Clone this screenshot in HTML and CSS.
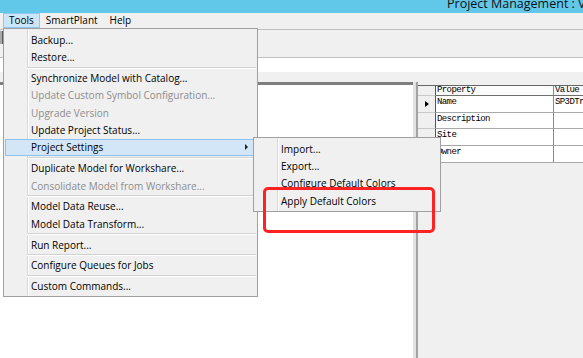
FILE: index.html
```html
<!DOCTYPE html>
<html lang="en">
  <head>
    <meta charset="UTF-8" />
    <title>Project Management</title>
    <link rel="stylesheet" href="styles.css">
  </head>
  <body>
    <div class="titlebar"><span class="title">Project Management : V</span></div>
    <div class="menubar">
      <span class="menubar-item open">Tools</span>
      <span class="menubar-item">SmartPlant</span>
      <span class="menubar-item">Help</span>
    </div>
    <div class="toolbar"><span class="tool-btn"></span></div>
    <div class="addressbar"></div>
    <div class="addressbar-gap"></div>
    <div class="workspace">
      <div class="tree-pane"></div>
      <div class="splitter"></div>
      <div class="grid-pane">
        <div class="prop-grid">
          <div class="cell rowhead head"></div>
          <div class="cell head">Property</div>
          <div class="cell head">Value</div>

          <div class="cell rowhead"><span class="row-mark"></span></div>
          <div class="cell">Name</div>
          <div class="cell">SP3DTrain</div>

          <div class="cell rowhead"></div>
          <div class="cell">Description</div>
          <div class="cell"></div>

          <div class="cell rowhead"></div>
          <div class="cell">Site</div>
          <div class="cell"></div>

          <div class="cell rowhead"></div>
          <div class="cell">Owner</div>
          <div class="cell"></div>
        </div>
      </div>
    </div>

    <div class="menu tools-menu">
      <div class="menu-item">Backup...</div>
      <div class="menu-item">Restore...</div>
      <div class="menu-sep"></div>
      <div class="menu-item">Synchronize Model with Catalog...</div>
      <div class="menu-item disabled">Update Custom Symbol Configuration...</div>
      <div class="menu-item disabled">Upgrade Version</div>
      <div class="menu-item">Update Project Status...</div>
      <div class="menu-item active">Project Settings<span class="sub-arrow"></span></div>
      <div class="menu-sep"></div>
      <div class="menu-item">Duplicate Model for Workshare...</div>
      <div class="menu-item disabled">Consolidate Model from Workshare...</div>
      <div class="menu-sep"></div>
      <div class="menu-item">Model Data Reuse...</div>
      <div class="menu-item">Model Data Transform...</div>
      <div class="menu-sep"></div>
      <div class="menu-item">Run Report...</div>
      <div class="menu-sep"></div>
      <div class="menu-item">Configure Queues for Jobs</div>
      <div class="menu-sep"></div>
      <div class="menu-item">Custom Commands...</div>
    </div>

    <div class="menu sub-menu">
      <div class="menu-item">Import...</div>
      <div class="menu-item">Export...</div>
      <div class="menu-item">Configure Default Colors</div>
      <div class="menu-item">Apply Default Colors</div>
    </div>

    <div class="callout"></div>
  </body>
</html>
```

FILE: styles.css
```css
* {
  box-sizing: border-box;
}

body {
  margin: 0;
  width: 583px;
  height: 358px;
  overflow: hidden;
  position: relative;
  font-family: "Open Sans", "Noto Sans", sans-serif;
  font-size: 10px;
  color: #000000;
  background: #ffffff;
}

/* window chrome */
.titlebar {
  height: 13px;
  padding-left: 447px;
  background: #62c8ea;
  overflow: hidden;
  white-space: nowrap;
}
.title {
  display: block;
  margin-top: -3px;
  font-size: 12.5px;
  line-height: 13px;
  color: #111111;
}

.menubar {
  display: flex;
  height: 16px;
  padding-left: 3px;
  background: #f0f0f0;
}
.menubar-item {
  height: 15px;
  padding: 0 5px;
  line-height: 13px;
  border: 1px solid transparent;
}
.menubar-item.open {
  background: #cce6f9;
  border-color: #93c7ee;
}

.toolbar {
  height: 28px;
  padding-top: 1px;
  border-top: 1px solid #c0c0c0;
  background: #f0f0f0;
}
.tool-btn {
  display: block;
  width: 3px;
  height: 13px;
  background: #a8a8a8;
  border-right: 1px solid #5c5c5c;
}

.addressbar {
  height: 15px;
  border-top: 1px solid #c0c0c0;
  background: #ffffff;
}
.addressbar-gap {
  height: 10px;
  background: #f0f0f0;
}

/* panes */
.workspace {
  display: flex;
  height: 276px;
}
.tree-pane {
  width: 413px;
  border-top: 3px solid #7e7e7e;
  background: #ffffff;
}
.splitter {
  width: 5px;
  background: linear-gradient(to right, #e2e2e2 0 3px, #a3a3a3 3px);
}
.grid-pane {
  flex: 1;
  padding-top: 3px;
  background: #f0f0f0;
  overflow: hidden;
}

.prop-grid {
  display: grid;
  grid-template-columns: 18px 118px 60px;
  grid-auto-rows: 16.7px;
  width: max-content;
  border-top: 1px solid #666666;
  font-family: "Liberation Mono", "DejaVu Sans Mono", monospace;
  font-size: 9px;
  letter-spacing: -0.6px;
  line-height: 9px;
}
.cell {
  padding: 2px 0 0 1px;
  background: #ffffff;
  border-right: 1px solid #8a8a8a;
  border-bottom: 1px solid #a8a8a8;
  white-space: nowrap;
  overflow: hidden;
}
.cell.head {
  height: 10px;
  padding-top: 0;
  background: #fbfbfb;
  border-bottom-color: #6e6e6e;
}
.prop-grid > .head {
  align-self: start;
}
.prop-grid {
  grid-template-rows: 10px;
}
.cell.rowhead {
  display: flex;
  align-items: center;
  justify-content: center;
  padding: 0;
  background: #f0f0f0;
  border-right-color: #555555;
  border-bottom-color: #c8c8c8;
}
.row-mark {
  border-left: 4px solid #000000;
  border-top: 3.5px solid transparent;
  border-bottom: 3.5px solid transparent;
}

/* drop down menus */
.menu {
  position: absolute;
  padding: 2px 1px 1px;
  border: 1px solid #a0a0a0;
  background: linear-gradient(to right, transparent 23px, #d9d9d9 23px, #d9d9d9 24px, #ffffff 24px, #ffffff 25px, transparent 25px),
    #f0f0f0;
}
.tools-menu {
  left: 3px;
  top: 28px;
  width: 255px;
}
.sub-menu {
  left: 253px;
  top: 137px;
  width: 188px;
}
.menu-item {
  display: flex;
  align-items: center;
  height: 17.4px;
  padding-left: 25px;
  border: 1px solid transparent;
  white-space: nowrap;
}
.menu-item.disabled {
  color: #8d8d8d;
}
.menu-item.active {
  background: #d3e6f8;
  border-color: #8ec2ee;
}
.sub-arrow {
  margin-left: auto;
  margin-right: 7px;
  border-left: 3px solid #222222;
  border-top: 3px solid transparent;
  border-bottom: 3px solid transparent;
}
.menu-sep {
  height: 3.4px;
  margin-left: 22px;
  padding-top: 1px;
}
.menu-sep::after {
  content: "";
  display: block;
  height: 1px;
  background: #d2d2d2;
  box-shadow: 0 1px 0 #ffffff;
}

/* red annotation box */
.callout {
  position: absolute;
  left: 263px;
  top: 187px;
  width: 172px;
  height: 46px;
  border: 3px solid #fe2323;
  border-radius: 5px;
}
```
